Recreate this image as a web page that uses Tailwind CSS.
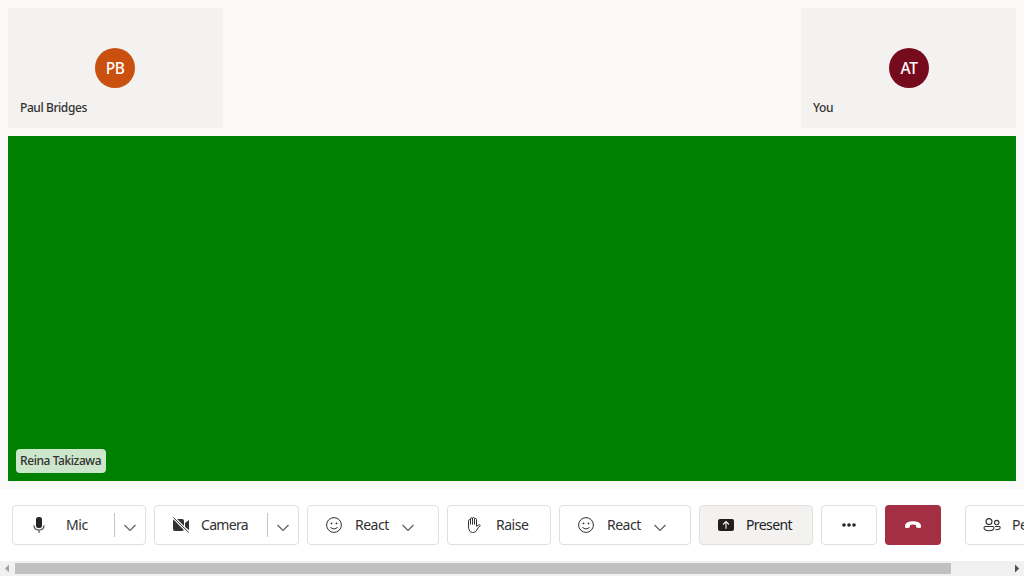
<!DOCTYPE html>
<html lang="en">
<head>
<meta charset="utf-8">
<title>Call</title>
<script src="https://cdn.jsdelivr.net/npm/@tailwindcss/browser@4"></script>
</head>
<body class="flex h-[576px] w-[1024px] flex-col overflow-hidden bg-white font-['Noto_Sans',sans-serif] text-[#323130]">
<svg class="hidden">
  <symbol id="chevron" viewBox="0 0 12 8"><path d="M.5 1 6 6.5 11.5 1" fill="none" stroke="#605e5c" stroke-width="1.2"/></symbol>
  <symbol id="smile" viewBox="0 0 16 16"><circle cx="8" cy="8" r="7.4" fill="none" stroke="#323130" stroke-width="1"/><circle cx="5.5" cy="6.4" r=".9" fill="#323130"/><circle cx="10.5" cy="6.4" r=".9" fill="#323130"/><path d="M4.6 10.3c1.7 2.2 5.1 2.2 6.8 0" fill="none" stroke="#323130" stroke-width="1" stroke-linecap="round"/></symbol>
</svg>
<main class="flex h-[489px] shrink-0 flex-col gap-2 bg-[#faf9f8] p-2">
  <div class="flex h-[120px] shrink-0 justify-between">
    <section class="flex w-[215px] flex-col rounded bg-[#f3f2f1] pt-10">
      <div class="ml-[87px] flex size-10 items-center justify-center rounded-full bg-[#ca5010] pb-px text-[15.5px] leading-5 font-medium tracking-[-0.5px] text-white">PB</div>
      <span class="mt-3 ml-3 text-[12px] leading-4 font-[550] tracking-[-0.42px]">Paul Bridges</span>
    </section>
    <section class="flex w-[215px] flex-col rounded bg-[#f3f2f1] pt-10">
      <div class="ml-[88px] flex size-10 items-center justify-center rounded-full bg-[#750b1c] pb-px text-[15.5px] leading-5 font-medium tracking-[-0.3px] text-white">AT</div>
      <span class="mt-3 ml-3 text-[12px] leading-4 font-[550] tracking-[-0.42px]">You</span>
    </section>
  </div>
  <section class="flex h-[345px] items-end bg-[#008000] p-2">
    <span class="flex h-6 w-[90px] items-center rounded bg-white/80 px-1 text-[12px] leading-4 font-[550] tracking-[-0.42px] whitespace-nowrap">Reina Takizawa</span>
  </section>
</main>
<nav class="flex h-[72px] shrink-0 gap-2 overflow-hidden bg-white pt-4 pl-3 text-[14px] leading-5">
  <button class="flex h-10 w-[134px] shrink-0 items-center rounded border border-[#e1dfdd]">
    <svg class="ml-[18px] size-4 shrink-0" viewBox="0 0 16 16"><rect x="5" y="0" width="6" height="11" rx="2.5" fill="#252423"/><path d="M2.9 8.2C3.2 14.5 12.8 14.5 13.1 8.2M8 13v3" fill="none" stroke="#484644" stroke-width="1.1"/></svg>
    <span class="ml-[19px] w-[48px] text-left tracking-[-0.4px]">Mic</span>
    <span class="h-6 w-px bg-[#c8c6c4]"></span>
    <svg class="mt-[5px] ml-[9px] h-2 w-3"><use href="#chevron"/></svg>
  </button>
  <button class="flex h-10 w-[145px] shrink-0 items-center rounded border border-[#e1dfdd]">
    <svg class="ml-[18px] size-4 shrink-0" viewBox="0 0 16 16"><path d="M2 2h7q2 0 2 2v8q0 2-2 2H2q-2 0-2-2V4q0-2 2-2ZM12 6l4-3v10l-4-3Z" fill="#323130"/><path d="M0 0l16 16" stroke="white" stroke-width="3"/><path d="M.3.5 15.8 15.5" stroke="#323130"/></svg>
    <span class="ml-[12px] w-[66px] text-left tracking-[-0.7px]">Camera</span>
    <span class="h-6 w-px bg-[#c8c6c4]"></span>
    <svg class="mt-[5px] ml-[9px] h-2 w-3"><use href="#chevron"/></svg>
  </button>
  <button class="flex h-10 w-[132px] shrink-0 items-center rounded border border-[#e1dfdd]">
    <svg class="ml-[18px] size-4 shrink-0"><use href="#smile"/></svg>
    <span class="ml-[13px] w-[47px] text-left tracking-[-0.5px]">React</span>
    <svg class="mt-[5px] h-2 w-3"><use href="#chevron"/></svg>
  </button>
  <button class="flex h-10 w-[104px] shrink-0 items-center rounded border border-[#e1dfdd]">
    <svg class="ml-[18px] size-4 shrink-0" viewBox="0 0 16 16"><path d="M2.5 9V3.7q0-1.1 1-1.1t1 1.1V7.5M4.5 4V1.8Q4.5.7 5.5.7t1 1.1V7.5M6.5 2V1.5q0-1 1-1t1 1V7.5M8.5 3V2.5q0-1 1-1t1 1V9.3l2-1.300q1-.5 1.800.5-2.300 2-3.300 4.300-1.200 2.700-3.800 2.700H6.500q-2.300 0-3.300-2.500Q2.500 11.500 2.500 9" fill="none" stroke="#323130" stroke-width="1" stroke-linejoin="round"/></svg>
    <span class="ml-[14px] tracking-[-0.5px]">Raise</span>
  </button>
  <button class="flex h-10 w-[132px] shrink-0 items-center rounded border border-[#e1dfdd]">
    <svg class="ml-[18px] size-4 shrink-0"><use href="#smile"/></svg>
    <span class="ml-[13px] w-[47px] text-left tracking-[-0.5px]">React</span>
    <svg class="mt-[5px] h-2 w-3"><use href="#chevron"/></svg>
  </button>
  <button class="flex h-10 w-[114px] shrink-0 items-center rounded border border-[#e1dfdd] bg-[#f3f2f1] text-[#201f1e]">
    <svg class="ml-[18px] size-4 shrink-0" viewBox="0 0 16 16"><rect y="2" width="16" height="12" rx="2" fill="#201f1e"/><path d="M8 11.8V4.8M5 7.5l3-3 3 3" fill="none" stroke="#f3f2f1" stroke-width="1.1"/></svg>
    <span class="ml-[12px] tracking-[-0.6px]">Present</span>
  </button>
  <button class="flex h-10 w-14 shrink-0 items-center justify-center rounded border border-[#e1dfdd]">
    <svg class="size-4" viewBox="0 0 16 16" fill="#252423"><circle cx="3" cy="8" r="1.8"/><circle cx="8" cy="8" r="1.8"/><circle cx="13" cy="8" r="1.8"/></svg>
  </button>
  <button class="flex h-10 w-14 shrink-0 items-center justify-center rounded bg-[#a42e43]">
    <svg class="size-4" viewBox="0 0 16 16"><path d="M0 8.8Q.4 4.2 8 4.2t8 4.6v1q0 1.500-1.500 1.300l-2.400-.4q-1-.2-1.100-1.200l-.1-1.400Q8 6.700 5.100 8.100L5 9.500q-.1 1-1.100 1.200l-2.400.4Q0 11.300 0 9.800Z" fill="white"/></svg>
  </button>
  <button class="ml-4 flex h-10 w-[114px] shrink-0 items-center rounded border border-[#e1dfdd]">
    <svg class="ml-[17px] h-4 w-[18px] shrink-0" viewBox="0 0 18 16" fill="none" stroke="#323130" stroke-width="1.1"><circle cx="6" cy="4.6" r="3"/><circle cx="13.7" cy="5.6" r="2.2"/><path d="M2.3 9.5h7.4q1.300 0 1.300 1.300c0 2-2 3-5 3s-5-1-5-3q0-1.300 1.300-1.300ZM12 9.500h4q1.200 0 1.200 1.100c0 1.600-1.800 2.300-4.800 2.100"/></svg>
    <span class="ml-[11px] tracking-[-0.5px]">People</span>
  </button>
</nav>
<footer class="flex h-[15px] shrink-0 items-center bg-[#f1f1f1]">
  <svg class="h-[15px] w-[15px]" viewBox="0 0 15 15"><path d="M9 3.5v8L5 7.5Z" fill="#a3a3a3"/></svg>
  <div class="h-[11px] w-[936px] bg-[#c1c1c1]"></div>
  <svg class="ml-auto h-[15px] w-[15px]" viewBox="0 0 15 15"><path d="M6 3.5v8L10.2 7.5Z" fill="#505050"/></svg>
</footer>
</body>
</html>
